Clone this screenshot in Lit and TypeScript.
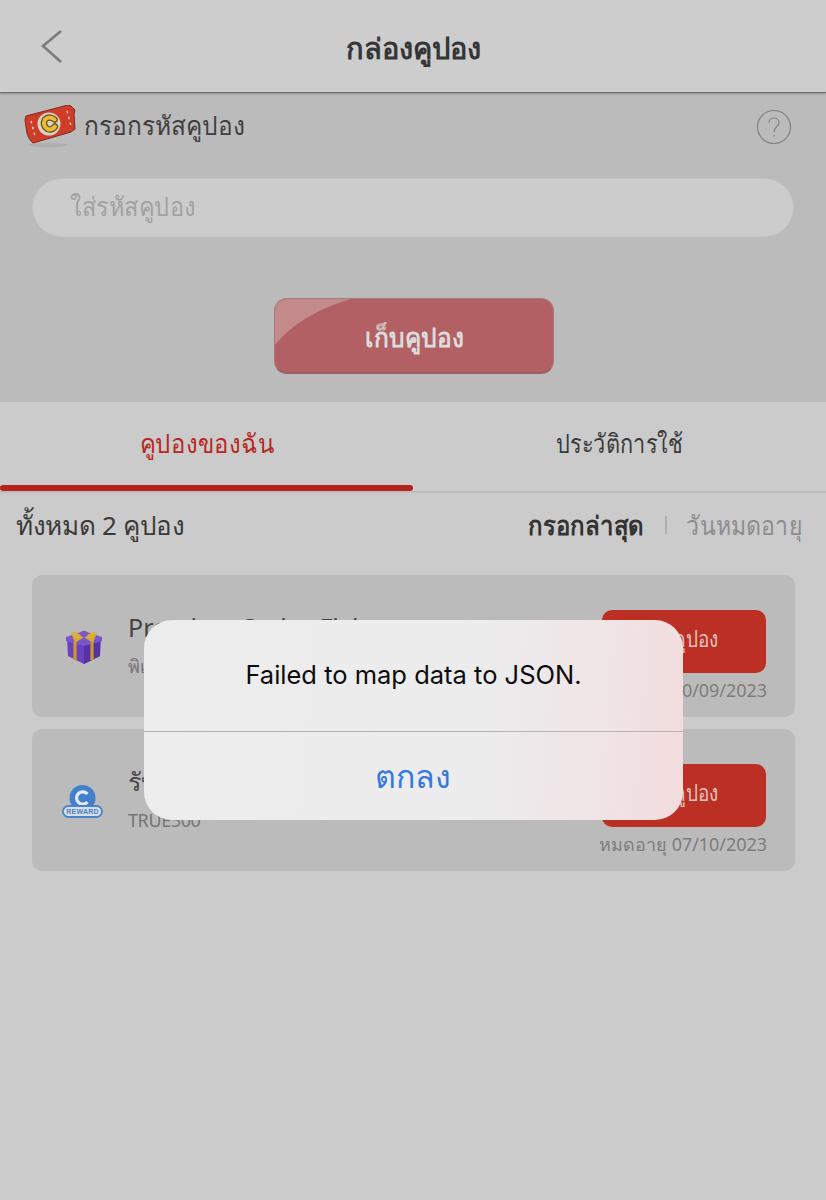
import { LitElement, html, css } from 'lit';
import { customElement } from 'lit/decorators.js';

const coupons = [
  { title: 'Premium Series Fixin', code: 'พิเศษ', expiry: 'หมดอายุ 30/09/2023', icon: 'gift' },
  { title: 'รับเหรียญ', code: 'TRUE500', expiry: 'หมดอายุ 07/10/2023', icon: 'reward' },
];

@customElement('app-root')
export class AppRoot extends LitElement {
  static styles = css`
    :host {
      display: block;
      position: relative;
      width: 826px;
      height: 1200px;
      overflow: hidden;
      background: #cbcbcb;
      font-family: "Noto Sans", "Liberation Sans", "DejaVu Sans", sans-serif;
      color: #3a3a3a;
    }
    /* the app's thai face is narrower than the installed one */
    .cond {
      display: inline-block;
      white-space: nowrap;
    }
    .header {
      height: 93px;
      box-sizing: border-box;
      padding-top: 5px;
      display: flex;
      align-items: center;
      justify-content: center;
      position: relative;
      background: #cdcdcd;
      border-bottom: 1px solid #6f6f6f;
      box-shadow: 0 1px 2px rgba(0, 0, 0, 0.25);
      z-index: 1;
    }
    .back {
      position: absolute;
      left: 40px;
      top: 29px;
    }
    .header h1 {
      margin: 0;
      font-size: 29px;
      font-weight: 700;
      color: #363636;
    }
    .redeem {
      height: 309px;
      box-sizing: border-box;
      background: #bbbbbb;
      padding: 13px 32px 0 24px;
      display: flex;
      flex-direction: column;
    }
    .redeem-top {
      display: flex;
      align-items: center;
      height: 42px;
    }
    .redeem-top .label {
      flex: 1;
      margin: 0 0 4px 6px;
      font-size: 26px;
      color: #3f3f3f;
      transform: scaleX(0.94);
      transform-origin: left center;
    }
    .redeem-top svg.help {
      margin-right: 2px;
    }
    .field {
      margin: 30px 0 0 8px;
      height: 59px;
      box-sizing: border-box;
      border-radius: 30px;
      background: #cccccc;
      border: 1px solid #c3c3c3;
      padding: 0 0 2px 37px;
      display: flex;
      align-items: center;
      font-size: 26px;
      color: #a2a2a2;
    }
    .field span {
      transform: scaleX(0.906);
      transform-origin: left center;
    }
    .collect {
      align-self: flex-start;
      margin: 61px 0 0 250px;
      width: 280px;
      height: 76px;
      padding-top: 3px;
      box-sizing: border-box;
      position: relative;
      overflow: hidden;
      border-radius: 13px;
      background: #b36064;
      border: 1px solid #a9787a;
      border-bottom: 2px solid #986064;
      display: flex;
      align-items: center;
      justify-content: center;
      font-size: 26px;
      font-weight: 700;
      color: #dcdcdc;
    }
    .gloss {
      position: absolute;
      left: 0;
      top: 0;
    }
    .collect b {
      position: relative;
      transform: scaleX(0.94);
    }
    .tabs {
      display: flex;
      height: 91px;
      box-sizing: border-box;
      border-bottom: 2px solid #bdbdbd;
      position: relative;
    }
    .tab {
      flex: 1;
      display: flex;
      align-items: center;
      justify-content: center;
      padding-bottom: 6px;
      font-size: 26px;
      color: #3a3a3a;
    }
    .tab.active {
      color: #b82720;
    }
    .tab.active span {
      transform: scaleX(0.92);
    }
    .tab span {
      transform: scaleX(0.835);
    }
    .underline {
      position: absolute;
      left: 0;
      bottom: 0;
      width: 413px;
      height: 6px;
      border-radius: 3px;
      background: #b5211c;
    }
    .summary {
      height: 70px;
      box-sizing: border-box;
      padding: 0 24px 6px 16px;
      display: flex;
      align-items: center;
      font-size: 26px;
    }
    .summary .total {
      flex: 1;
      letter-spacing: -0.3px;
      color: #3a3a3a;
    }
    .summary b {
      color: #333;
      transform: scaleX(0.92);
      transform-origin: right center;
    }
    .summary i {
      width: 2px;
      height: 18px;
      margin: 0 5px 0 21px;
      background: #b0b0b0;
    }
    .summary em {
      font-style: normal;
      color: #8d8d8d;
      transform: scaleX(0.89);
      transform-origin: right center;
    }
    .list {
      padding: 12px 31px 0 32px;
      display: flex;
      flex-direction: column;
      gap: 12px;
    }
    .card {
      height: 142px;
      box-sizing: border-box;
      border-radius: 10px;
      background: #bbbbbb;
      display: flex;
      padding: 35px 29px 0 32px;
    }
    .icon {
      width: 40px;
      margin-top: 17px;
      flex: none;
    }
    .icon.reward svg {
      margin: 3px 0 0 -2px;
    }
    .info {
      flex: 1;
      margin-top: -2px;
      padding-left: 24px;
    }
    .info .name {
      font-size: 25px;
      line-height: 38px;
      color: #444;
      white-space: nowrap;
    }
    .info .code {
      font-size: 18px;
      line-height: 28px;
      margin-top: 6px;
      letter-spacing: -0.4px;
      color: #757575;
    }
    .side {
      width: 165px;
      display: flex;
      flex-direction: column;
      align-items: flex-end;
    }
    .use {
      width: 164px;
      height: 63px;
      padding-bottom: 4px;
      box-sizing: border-box;
      border-radius: 10px;
      background: #bc2f24;
      color: #e3c6c2;
      font-size: 22px;
      display: flex;
      align-items: center;
      justify-content: center;
    }
    .use span {
      transform: scaleX(0.86);
    }
    .expiry {
      margin: 3px -1px 0 0;
      font-size: 18px;
      line-height: 28px;
      letter-spacing: -0.05px;
      color: #7d7d7d;
      white-space: nowrap;
    }
    .dialog {
      position: absolute;
      left: 144px;
      top: 620px;
      width: 539px;
      height: 200px;
      border-radius: 28px;
      overflow: hidden;
      background: linear-gradient(95deg, #ededee 0%, #ececed 62%, #f0e3e5 86%, #f3dcdd 100%);
      display: flex;
      flex-direction: column;
    }
    .message {
      height: 112px;
      box-sizing: border-box;
      padding-bottom: 3px;
      border-bottom: 1px solid #b6b2b3;
      display: flex;
      align-items: center;
      justify-content: center;
      font-family: Inter, "Liberation Sans", sans-serif;
      font-size: 25.5px;
      color: #0c0c0c;
    }
    .ok {
      flex: 1;
      display: flex;
      align-items: center;
      justify-content: center;
      padding-right: 2px;
      font-size: 32px;
      font-weight: 500;
      color: #3478e4;
    }
  `;

  private _ticket() {
    return html`<svg width="54" height="44" viewBox="0 0 54 44">
      <ellipse cx="24" cy="40" rx="20" ry="2" fill="#aeaeae" />
      <path d="M2 11 L44 0 L47 1 L51 5 L50 9 L51 24 L47 27 L9 38 L7 36 Q4 33 3 28 L1 15 Z" fill="#cf3c28" stroke="#7e2a1e" />
      <circle cx="25" cy="19" r="11.5" fill="#d6d2c8" />
      <path d="M30.5 14.5 Q25 10.5 21 14.5 Q18 20 23.5 24 Q28 25.5 31 21.5" fill="none" stroke="#6a4c18" stroke-width="6.4" stroke-linecap="round" />
      <path d="M30.5 14.5 Q25 10.5 21 14.5 Q18 20 23.5 24 Q28 25.5 31 21.5" fill="none" stroke="#e9bd33" stroke-width="4" stroke-linecap="round" />
      <path d="M7 16 L11 31 M43 6 L47 21" stroke="#f0d8c8" stroke-width="1.4" stroke-dasharray="2.5 3.5" />
    </svg>`;
  }

  private _gift() {
    return html`<svg width="40" height="40" viewBox="0 0 40 40">
      <path d="M3 11 L20 5 L37 11 L36 29 L20 37 L4 29 Z" fill="#6a42bd" />
      <path d="M20 17 L36 13 L36 29 L20 37 Z" fill="#5831a6" />
      <path d="M2 10 L20 4 L38 10 L38 14 L20 19 L2 14 Z" fill="#7d55ca" />
      <path d="M11 15 L11 33 M28 15 L28 33" stroke="#c79a2c" stroke-width="3.2" />
      <path d="M7 6 L11 16 L20 10 L29 16 L33 6 L20 10 Z" fill="#d6a934" />
      <path d="M19 11 C11 1 6 5 10 11 Z M21 11 C29 1 34 5 30 11 Z" fill="#dbae36" />
      <circle cx="20" cy="7" r="3.2" fill="#7c58c4" />
    </svg>`;
  }

  private _reward() {
    return html`<svg width="42" height="34" viewBox="0 0 42 34">
      <circle cx="20.5" cy="14" r="13" fill="#4280ce" />
      <path d="M25.5 10 A6.2 6.2 0 1 0 25.5 18" fill="none" stroke="#e4eaf2" stroke-width="3.2" />
      <rect x="1" y="22" width="39" height="11" rx="5.5" fill="#d9dfe7" stroke="#4a82cb" stroke-width="1.8" />
      <text x="20.5" y="30.3" text-anchor="middle" font-family="Liberation Sans" font-size="7" font-weight="700" letter-spacing="0.2" fill="#4a82cb">REWARD</text>
    </svg>`;
  }

  render() {
    return html`
      <div class="header">
        <svg class="back" width="24" height="36" viewBox="0 0 24 36">
          <path d="M21 2 L3 17 L21 33" fill="none" stroke="#7b7b7b" stroke-width="2.6" />
        </svg>
        <h1>กล่องคูปอง</h1>
      </div>
      <div class="redeem">
        <div class="redeem-top">
          ${this._ticket()}
          <span class="label">กรอกรหัสคูปอง</span>
          <svg class="help" width="36" height="36" viewBox="0 0 36 36">
            <circle cx="18" cy="18" r="16.5" fill="none" stroke="#808080" stroke-width="1.2" />
            <path d="M13 13.5 C13 7.5 23 7.5 23 13.5 C23 17.5 18 18 18 23 M18 26 L18 27.5" fill="none" stroke="#808080" stroke-width="1.2" />
          </svg>
        </div>
        <div class="field"><span class="cond">ใส่รหัสคูปอง</span></div>
        <div class="collect">
          <svg class="gloss" width="90" height="56" viewBox="0 0 90 56">
            <path d="M0 0 H76 C42 10 16 26 0 46 Z" fill="#c28a8a" />
          </svg>
          <b class="cond">เก็บคูปอง</b>
        </div>
      </div>
      <div class="tabs">
        <div class="tab active"><span class="cond">คูปองของฉัน</span></div>
        <div class="tab"><span class="cond">ประวัติการใช้</span></div>
        <div class="underline"></div>
      </div>
      <div class="summary">
        <span class="total">ทั้งหมด 2 คูปอง</span>
        <b class="cond">กรอกล่าสุด</b><i></i><em class="cond">วันหมดอายุ</em>
      </div>
      <div class="list">
        ${coupons.map(
          (c) => html`<div class="card">
            <div class="icon ${c.icon}">${c.icon === 'gift' ? this._gift() : this._reward()}</div>
            <div class="info">
              <div class="name">${c.title}</div>
              <div class="code">${c.code}</div>
            </div>
            <div class="side">
              <div class="use"><span class="cond">ใช้คูปอง</span></div>
              <div class="expiry">${c.expiry}</div>
            </div>
          </div>`
        )}
      </div>
      <div class="dialog">
        <div class="message">Failed to map data to JSON.</div>
        <div class="ok">ตกลง</div>
      </div>
    `;
  }
}
